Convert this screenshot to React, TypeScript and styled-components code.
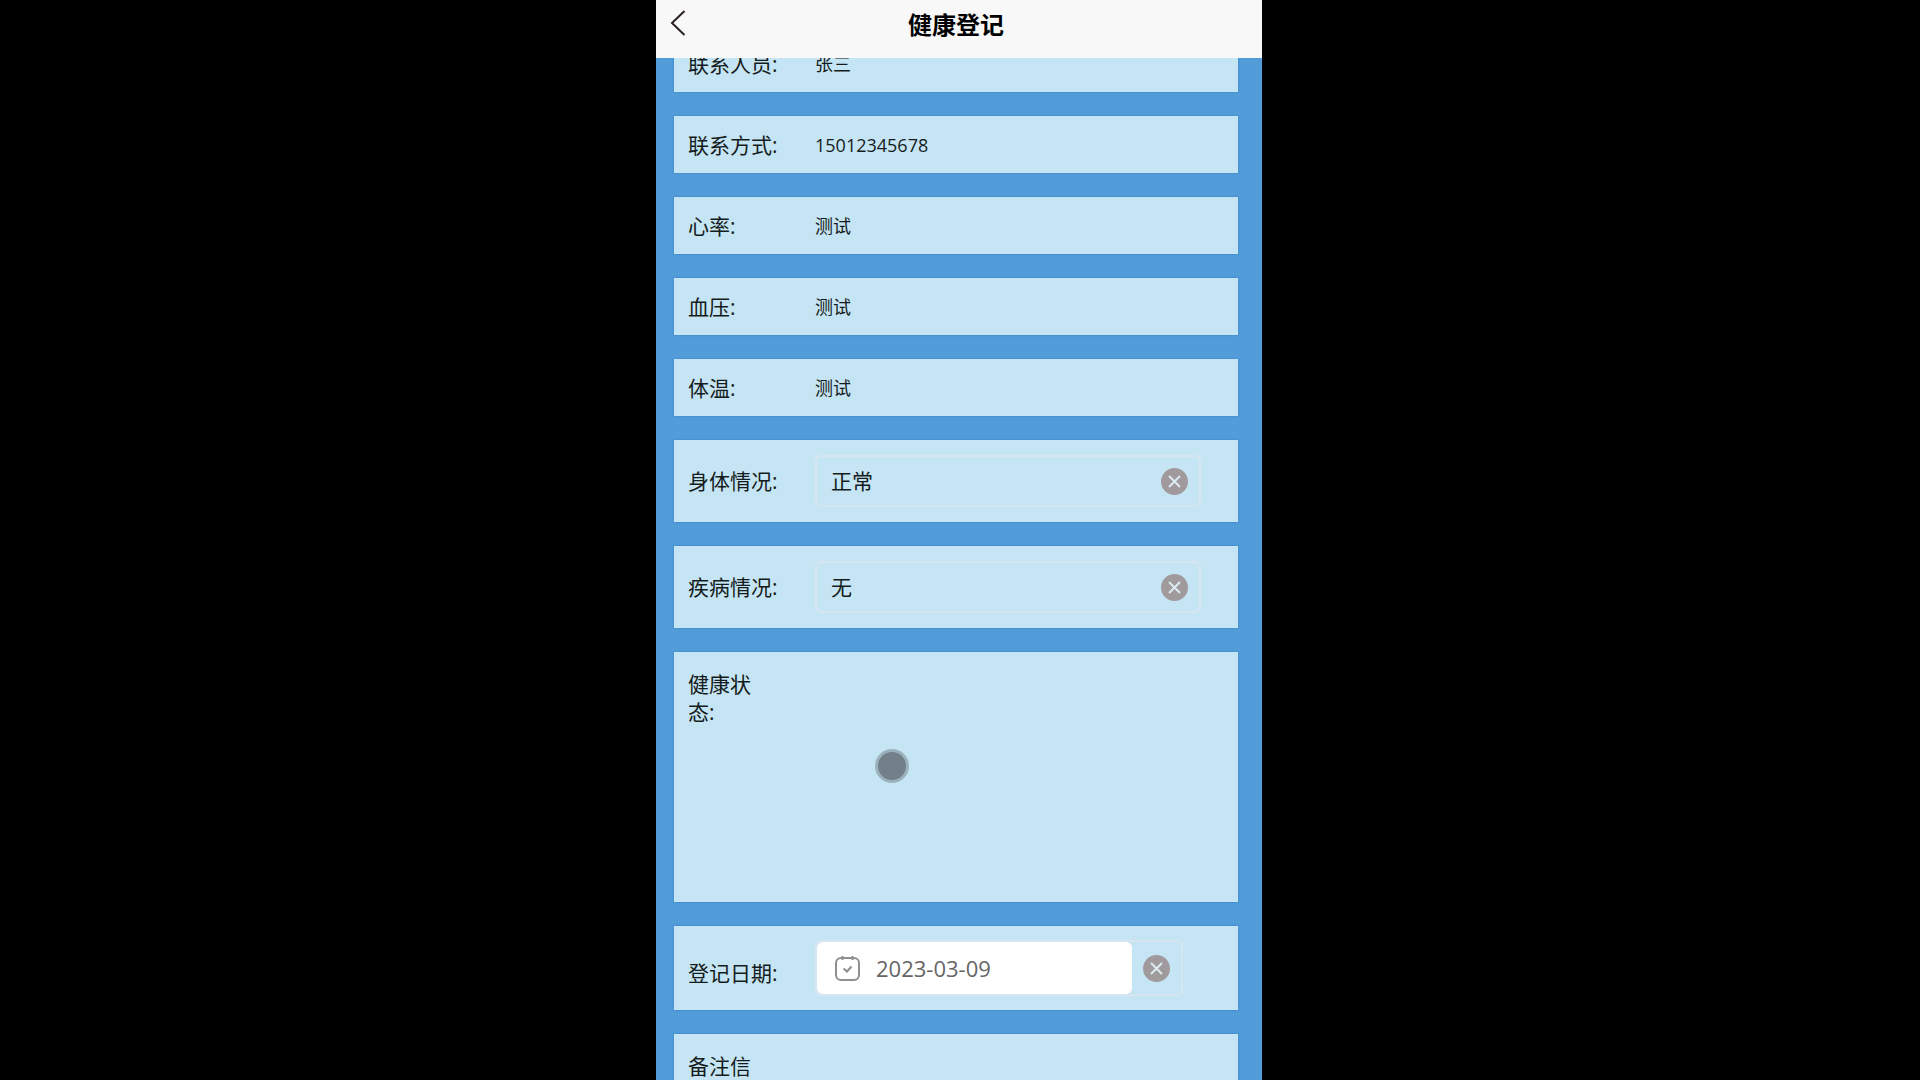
import React, { useState } from "react";
import styled, { createGlobalStyle } from "styled-components";

const GlobalStyle = createGlobalStyle`
  * { box-sizing: border-box; }
  body {
    margin: 0;
    padding-right: 2px;
    background: #000;
    color: #151c20;
    font-family: "Open Sans", "Noto Sans CJK SC", sans-serif;
  }
  input, select, textarea, button { font-family: inherit; color: inherit; }
`;

const Phone = styled.div`
  position: relative;
  display: flex;
  flex-direction: column;
  width: 100%;
  max-width: 606px;
  height: 100vh;
  margin: 0 auto;
  background: #529cda;
  overflow: hidden;
`;

const Header = styled.header`
  z-index: 1;
  flex: none;
  display: grid;
  grid-template-columns: 44px 1fr 50px;
  align-items: center;
  height: 58px;
  padding-bottom: 8px;
  background: #f8f8f8;
`;

const BackButton = styled.button`
  align-self: start;
  display: grid;
  place-items: center;
  height: 46px;
  padding: 0;
  border: 0;
  background: none;
  color: #2b2028;
`;

const Title = styled.h1`
  margin: 0;
  text-align: center;
  font-size: 24px;
  line-height: 32px;
  font-weight: 700;
  color: #000;
`;

const Scroller = styled.main`
  flex: 1;
  min-height: 0;
  overflow: hidden;
`;

/* The list is shown scrolled, with its first card partly under the header. */
const Form = styled.form`
  display: flex;
  flex-direction: column;
  gap: 24px;
  margin-top: -23px;
  padding: 0 24px 24px 18px;
`;

const Card = styled.div<{ $height: number; $top?: boolean }>`
  flex: none;
  display: flex;
  align-items: ${(p) => (p.$top ? "flex-start" : "center")};
  min-height: ${(p) => p.$height}px;
  padding: ${(p) => (p.$top ? "18px 14px" : "0 14px")};
  background: #c6e5f4;
  box-shadow: 0 0 2px rgba(20, 80, 140, 0.4);
`;

const Label = styled.label<{ $narrow?: boolean; $low?: boolean }>`
  flex: none;
  width: ${(p) => (p.$narrow ? 80 : 127)}px;
  margin-right: ${(p) => (p.$narrow ? 47 : 0)}px;
  padding-top: ${(p) => (p.$low ? 10 : 0)}px;
  font-size: 21px;
  line-height: 28px;
`;

const TextInput = styled.input`
  flex: 1;
  min-width: 0;
  height: 28px;
  padding: 0;
  border: 0;
  outline: 0;
  background: transparent;
  font-size: 18px;
  line-height: 28px;
`;

const TextArea = styled.textarea`
  flex: 1;
  min-width: 0;
  height: 214px;
  padding: 0;
  border: 0;
  outline: 0;
  resize: none;
  background: transparent;
  font-size: 18px;
  line-height: 28px;
`;

const ControlBox = styled.div<{ $inset: number }>`
  flex: 1;
  display: flex;
  align-items: center;
  min-width: 0;
  margin-right: ${(p) => p.$inset}px;
  padding-right: 11px;
  border: 2px solid #d7e6ee;
  border-radius: 6px;
`;

const Select = styled.select`
  flex: 1;
  min-width: 0;
  height: 48px;
  padding: 0 14px;
  border: 0;
  outline: 0;
  appearance: none;
  background: transparent;
  font-size: 21px;
`;

const DateField = styled.div`
  flex: 1;
  display: flex;
  align-items: center;
  gap: 16px;
  min-width: 0;
  height: 52px;
  margin-right: 11px;
  padding: 0 18px;
  border-radius: 6px;
  background: #fff;
`;

const DateInput = styled.input`
  flex: 1;
  min-width: 0;
  padding: 0;
  border: 0;
  outline: 0;
  background: transparent;
  font-size: 22px;
  line-height: 28px;
  color: #666;
`;

const ClearButton = styled.button`
  flex: none;
  display: block;
  width: 27px;
  height: 27px;
  padding: 0;
  border: 0;
  background: none;
`;

const TouchPoint = styled.div`
  position: absolute;
  left: 219px;
  top: 749px;
  width: 34px;
  height: 34px;
  border: 3px solid #9bb2bd;
  border-radius: 50%;
  background: #728189;
  pointer-events: none;
`;

function Clear({ label, onClick }: { label: string; onClick: () => void }) {
  return (
    <ClearButton type="button" aria-label={label} onClick={onClick}>
      <svg width="27" height="27" viewBox="0 0 27 27" aria-hidden="true">
        <circle cx="13.5" cy="13.5" r="13.5" fill="#a09a9d" />
        <path d="M8 8l11 11M19 8L8 19" stroke="#dceaf1" strokeWidth="2" fill="none" />
      </svg>
    </ClearButton>
  );
}

const texts = [
  { id: "contact", label: "联系人员:", value: "张三" },
  { id: "phone", label: "联系方式:", value: "15012345678" },
  { id: "heart", label: "心率:", value: "测试" },
  { id: "pressure", label: "血压:", value: "测试" },
  { id: "temperature", label: "体温:", value: "测试" },
];

const selects = [
  { id: "body", label: "身体情况:", value: "正常" },
  { id: "disease", label: "疾病情况:", value: "无" },
];

function SelectRow({ id, label, value }: { id: string; label: string; value: string }) {
  const [current, setCurrent] = useState(value);
  return (
    <Card $height={82}>
      <Label htmlFor={id}>{label}</Label>
      <ControlBox $inset={23}>
        <Select id={id} value={current} onChange={(e) => setCurrent(e.target.value)}>
          <option value="" />
          <option value={value}>{value}</option>
        </Select>
        <Clear label="清除" onClick={() => setCurrent("")} />
      </ControlBox>
    </Card>
  );
}

export default function App() {
  const [date, setDate] = useState("2023-03-09");
  return (
    <>
      <GlobalStyle />
      <Phone>
        <Header>
          <BackButton type="button" aria-label="返回">
            <svg width="16" height="26" viewBox="0 0 16 26" fill="none" aria-hidden="true">
              <path d="M14.5 1L2 13l12.5 12" stroke="currentColor" strokeWidth="2" />
            </svg>
          </BackButton>
          <Title>健康登记</Title>
        </Header>
        <Scroller>
          <Form>
            {texts.map((t) => (
              <Card key={t.id} $height={57}>
                <Label htmlFor={t.id}>{t.label}</Label>
                <TextInput id={t.id} defaultValue={t.value} />
              </Card>
            ))}
            {selects.map((s) => (
              <SelectRow key={s.id} {...s} />
            ))}
            <Card $height={250} $top>
              <Label htmlFor="status" $narrow>健康状态:</Label>
              <TextArea id="status" />
            </Card>
            <Card $height={84}>
              <Label htmlFor="date" $low>登记日期:</Label>
              <ControlBox $inset={41}>
                <DateField>
                  <svg width="25" height="26" viewBox="0 0 25 26" fill="none" stroke="#918e8e" strokeWidth="2" aria-hidden="true">
                    <rect x="1" y="3" width="23" height="22" rx="5" />
                    <path d="M7.500 1V5M17.500 1V5" />
                    <path d="M8.500 13.500L12 16.500L16.500 11.500" />
                  </svg>
                  <DateInput id="date" value={date} onChange={(e) => setDate(e.target.value)} />
                </DateField>
                <Clear label="清除日期" onClick={() => setDate("")} />
              </ControlBox>
            </Card>
            <Card $height={250} $top>
              <Label htmlFor="remark" $narrow>备注信息:</Label>
              <TextArea id="remark" />
            </Card>
          </Form>
        </Scroller>
        <TouchPoint />
      </Phone>
    </>
  );
}
